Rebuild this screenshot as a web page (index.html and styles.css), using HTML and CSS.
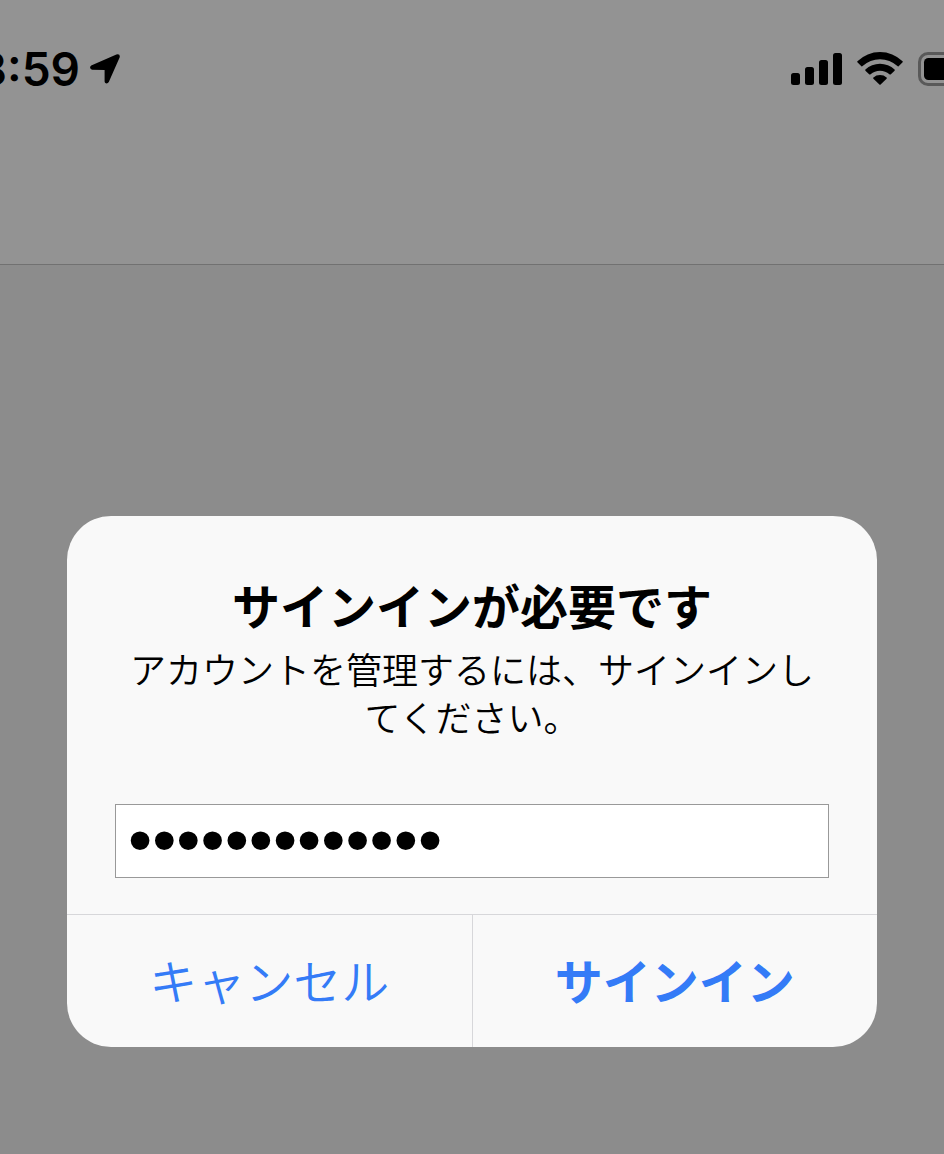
FILE: index.html
```html
<!DOCTYPE html>
<html lang="ja">
<head>
<meta charset="UTF-8">
<meta name="viewport" content="width=device-width, initial-scale=1.0">
<title>サインイン</title>
<link rel="stylesheet" href="styles.css">
</head>
<body>
    <header class="top-bar">
        <div class="status-left">
            <span class="clock">8:59</span>
            <svg class="location-icon" viewBox="0 0 30 30" width="30" height="30" aria-hidden="true">
                <path d="M1.2 11.6 L26.4 .4 Q30.6 -.6 29.6 3.6 L18.8 28 Q17.2 30.4 15 28.8 L14.6 27.6 L14.6 16 L2 15.8 Q-1.4 14 1.2 11.6Z"/>
            </svg>
        </div>
        <div class="status-right">
            <svg width="51" height="32" viewBox="0 0 51 32" aria-hidden="true">
                <rect x="0" y="20" width="9" height="12" rx="2.5"/>
                <rect x="14" y="14" width="9" height="18" rx="2.5"/>
                <rect x="28" y="7" width="9" height="25" rx="2.5"/>
                <rect x="42" y="0" width="9" height="32" rx="2.5"/>
            </svg>
            <svg width="46" height="34" viewBox="0 0 46 34" aria-hidden="true">
                <path d="M.4 9.2 A32.5 32.5 0 0 1 45.6 9.2 Q46 9.8 45.6 10.3 L41.6 14.2 Q41 14.6 40.4 14.1 A25.4 25.4 0 0 0 5.6 14.1 Q5 14.6 4.4 14.2 L.4 10.3 Q0 9.8 .4 9.2Z"/>
                <path d="M8.4 17.6 A21 21 0 0 1 37.6 17.6 Q38 18.2 37.6 18.7 L33.6 22.4 Q33 22.8 32.4 22.3 A13.9 13.9 0 0 0 13.6 22.3 Q13 22.8 12.4 22.4 L8.4 18.7 Q8 18.2 8.4 17.6Z"/>
                <path d="M16.4 25.6 A10 10 0 0 1 29.6 25.6 Q30 26.2 29.6 26.7 L23.6 32.5 Q23 33 22.4 32.5 L16.4 26.7 Q16 26.2 16.4 25.6Z"/>
            </svg>
            <svg class="battery-icon" width="74" height="34" viewBox="0 0 74 34" aria-hidden="true">
                <rect x="1.5" y="1.5" width="66" height="31" rx="8.5" fill="none" stroke="#595959" stroke-width="3"/>
                <rect x="6" y="6" width="57" height="22" rx="4.5"/>
                <path d="M70 12 Q74 13 74 17 Q74 21 70 22Z" fill="#595959"/>
            </svg>
        </div>
    </header>

    <main>
        <form class="dialog" role="dialog" aria-labelledby="dialog-title">
            <div class="dialog-body">
                <h1 id="dialog-title">サインインが必要です</h1>
                <label for="password">アカウントを管理するには、サインインしてください。</label>
                <input type="password" id="password" name="password" value="abcdefghijklm">
            </div>
            <div class="dialog-actions">
                <button type="button" class="cancel">キャンセル</button>
                <button type="submit" class="sign-in">サインイン</button>
            </div>
        </form>
    </main>
</body>
</html>
```
FILE: styles.css
```css
/* Global Styles */
* {
    box-sizing: border-box;
}

body {
    font-family: "Noto Sans CJK JP", sans-serif;
    background-color: #8c8c8c;
    color: #000;
    margin: 0;
    min-height: 100vh;
    overflow-x: hidden;
}

/* Status bar and empty navigation bar */
.top-bar {
    display: flex;
    justify-content: space-between;
    align-items: flex-start;
    height: 265px;
    padding-top: 52px;
    background-color: #939393;
    border-bottom: 1px solid #717171;
    overflow: hidden;
}

.status-left, .status-right {
    display: flex;
    align-items: center;
    height: 34px;
}

.status-left {
    justify-content: flex-end;
    width: 120px;
    gap: 10px;
}

.clock {
    font-family: Inter, sans-serif;
    font-size: 46px;
    font-weight: 600;
    line-height: 34px;
}

.location-icon {
    flex-shrink: 0;
}

.status-right {
    gap: 15px;
    margin-right: -48px;
}

/* Sign-in dialog */
main {
    padding: 251px 67px 107px;
}

.dialog {
    background-color: #f9f9f9;
    border-radius: 44px;
    overflow: hidden;
}

.dialog-body {
    display: flex;
    flex-direction: column;
    padding: 52px 48px 36px;
    text-align: center;
}

h1 {
    margin: 0 0 4px;
    font-size: 48px;
    font-weight: bold;
    line-height: 72px;
}

label {
    font-size: 36px;
    font-weight: 350;
    line-height: 48px;
    margin-bottom: 64px;
}

input {
    width: 100%;
    height: 74px;
    padding: 0 12px 4px;
    border: 1px solid #999;
    border-radius: 0;
    background-color: #fff;
    color: #000;
    font-family: "Liberation Sans", Arial, sans-serif;
    font-size: 69px;
    outline: none;
}

.dialog-actions {
    display: flex;
    border-top: 1px solid #d7d7da;
}

button {
    flex: 1;
    height: 132px;
    padding: 0 0 4px;
    border: none;
    background: none;
    color: #347bf7;
    font-family: inherit;
    font-size: 48px;
    cursor: pointer;
}

.cancel {
    border-right: 1px solid #d7d7da;
    font-weight: 350;
}

.sign-in {
    font-weight: bold;
}
```
